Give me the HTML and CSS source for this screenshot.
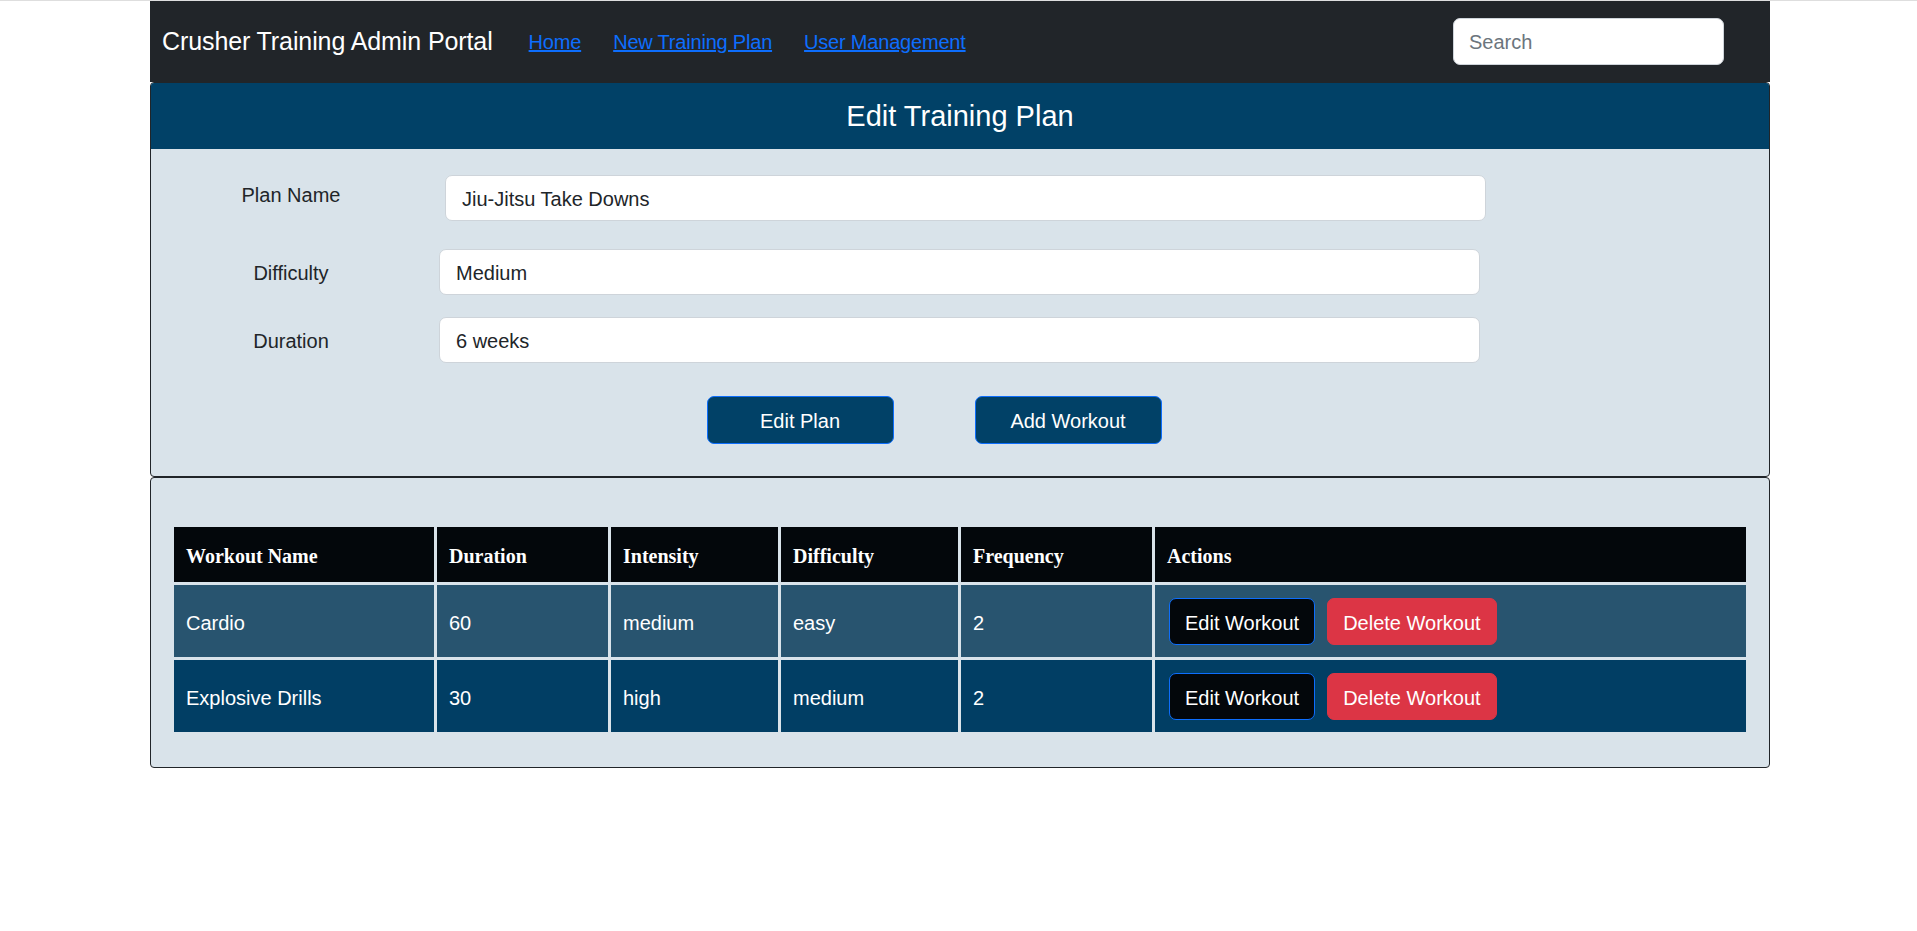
FILE: index.html
```html
<!DOCTYPE html>
<html lang="en">
<head>
<meta charset="utf-8">
<title>Crusher Training Admin Portal</title>
<link rel="stylesheet" href="styles.css">
</head>
<body>
<div class="page">
  <nav class="navbar">
    <span class="brand">Crusher Training Admin Portal</span>
    <ul class="nav-links">
      <li><a href="#">Home</a></li>
      <li><a href="#">New Training Plan</a></li>
      <li><a href="#">User Management</a></li>
    </ul>
    <input class="search" type="text" placeholder="Search">
  </nav>

  <section class="card card-form">
    <h4 class="card-title">Edit Training Plan</h4>
    <div class="form-body">
      <div class="form-row row-first">
        <label class="form-label label-top">Plan Name</label>
        <input class="field field-wide" type="text" value="Jiu-Jitsu Take Downs">
      </div>
      <div class="form-row row-second">
        <label class="form-label">Difficulty</label>
        <input class="field" type="text" value="Medium">
      </div>
      <div class="form-row row-third">
        <label class="form-label">Duration</label>
        <input class="field" type="text" value="6 weeks">
      </div>
      <div class="form-actions">
        <button class="btn btn-plan">Edit Plan</button>
        <button class="btn btn-plan">Add Workout</button>
      </div>
    </div>
  </section>

  <section class="card card-table">
    <table class="workouts">
      <thead>
        <tr>
          <th class="col-name">Workout Name</th>
          <th class="col-duration">Duration</th>
          <th class="col-intensity">Intensity</th>
          <th class="col-difficulty">Difficulty</th>
          <th class="col-frequency">Frequency</th>
          <th class="col-actions">Actions</th>
        </tr>
      </thead>
      <tbody>
        <tr class="row-light">
          <td>Cardio</td>
          <td>60</td>
          <td>medium</td>
          <td>easy</td>
          <td>2</td>
          <td><div class="actions"><button class="btn btn-dark">Edit Workout</button><button class="btn btn-danger">Delete Workout</button></div></td>
        </tr>
        <tr class="row-dark">
          <td>Explosive Drills</td>
          <td>30</td>
          <td>high</td>
          <td>medium</td>
          <td>2</td>
          <td><div class="actions"><button class="btn btn-dark">Edit Workout</button><button class="btn btn-danger">Delete Workout</button></div></td>
        </tr>
      </tbody>
    </table>
  </section>
</div>
</body>
</html>
```

FILE: styles.css
```css
* {
  box-sizing: border-box;
}

html, body {
  margin: 0;
  padding: 0;
  background: #ffffff;
}

body {
  border-top: 1px solid #dedede;
  font-family: "Liberation Sans", Arial, sans-serif;
  font-size: 20px;
  line-height: 1.5;
  color: #212529;
}

.page {
  width: 1620px;
  margin-left: 150px;
}

/* Navbar */
.navbar {
  display: flex;
  align-items: center;
  height: 81px;
  padding: 0 46px 0 12px;
  background: #212529;
}

.brand {
  color: #ffffff;
  font-size: 25px;
  letter-spacing: -0.1px;
  white-space: nowrap;
}

.nav-links {
  display: flex;
  gap: 32px;
  list-style: none;
  margin: 0 0 0 36px;
  padding: 0;
}

.nav-links a {
  color: #0d6efd;
  text-decoration: underline;
  font-size: 20px;
  letter-spacing: -0.2px;
}

.search {
  margin-left: auto;
  width: 271px;
  height: 47px;
  padding: 2px 15px 0;
  border: 1px solid #ced4da;
  border-radius: 7px;
  background: #ffffff;
  font-family: inherit;
  font-size: 20px;
  color: #212529;
}

.search::placeholder {
  color: #6c757d;
}

/* Cards */
.card {
  border: 1px solid #212529;
  border-radius: 4px;
  background: #d9e3ea;
  overflow: hidden;
}

.card-title {
  margin: 0;
  height: 66px;
  padding-top: 2px;
  display: flex;
  align-items: center;
  justify-content: center;
  background: #014167;
  color: #ffffff;
  font-size: 29px;
  font-weight: 400;
}

.form-body {
  padding: 26px 0 32px;
}

.form-row {
  display: flex;
  align-items: center;
}

.row-second {
  margin-top: 28px;
}

.row-third {
  margin-top: 22px;
}

.form-label {
  width: 280px;
  flex: none;
  padding-top: 2px;
  text-align: center;
  font-size: 20px;
  color: #212529;
}

.label-top {
  align-self: flex-start;
  margin-top: 3px;
}

.field {
  width: 1041px;
  height: 46px;
  margin-left: 8px;
  padding: 3px 16px 0;
  border: 1px solid #ced4da;
  border-radius: 7px;
  background: #ffffff;
  font-family: inherit;
  font-size: 20px;
  color: #212529;
}

.field-wide {
  margin-left: 14px;
}

.form-actions {
  display: flex;
  justify-content: center;
  gap: 81px;
  margin-top: 33px;
  padding-right: 52px;
}

.btn {
  font-family: inherit;
  font-size: 20px;
  line-height: 30px;
  color: #ffffff;
  border-radius: 7px;
  cursor: pointer;
}

.btn-plan {
  width: 187px;
  height: 48px;
  padding: 2px 0 0;
  background: #014167;
  border: 1px solid #0d6efd;
}

/* Table card */
.card-table {
  padding: 46px 20px 32px;
}

.workouts {
  width: 1578px;
  table-layout: fixed;
  border-collapse: separate;
  border-spacing: 3px;
  color: #ffffff;
}

.workouts th {
  box-sizing: border-box;
  height: 55px;
  background: #03070b;
  font-family: "Liberation Serif", "Times New Roman", serif;
  font-weight: 700;
  font-size: 20px;
  line-height: 30px;
  text-align: left;
  padding: 14px 12px 11px;
  vertical-align: middle;
}

.col-name { width: 260px; }
.col-duration { width: 171px; }
.col-intensity { width: 167px; }
.col-difficulty { width: 177px; }
.col-frequency { width: 191px; }

.workouts td {
  height: 72px;
  font-size: 20px;
  line-height: 30px;
  padding: 14px 12px 11px;
  vertical-align: middle;
}

.row-light td {
  background: #28546f;
}

.row-dark td {
  background: #013e64;
}

.actions {
  display: flex;
  gap: 12px;
  padding-left: 2px;
  margin-top: -2px;
}

.btn-dark,
.btn-danger {
  height: 47px;
  padding: 2px 15px 0;
}

.btn-dark {
  background: #03070b;
  border: 1px solid #0d6efd;
}

.btn-danger {
  background: #dc3545;
  border: 1px solid #dc3545;
}
```
